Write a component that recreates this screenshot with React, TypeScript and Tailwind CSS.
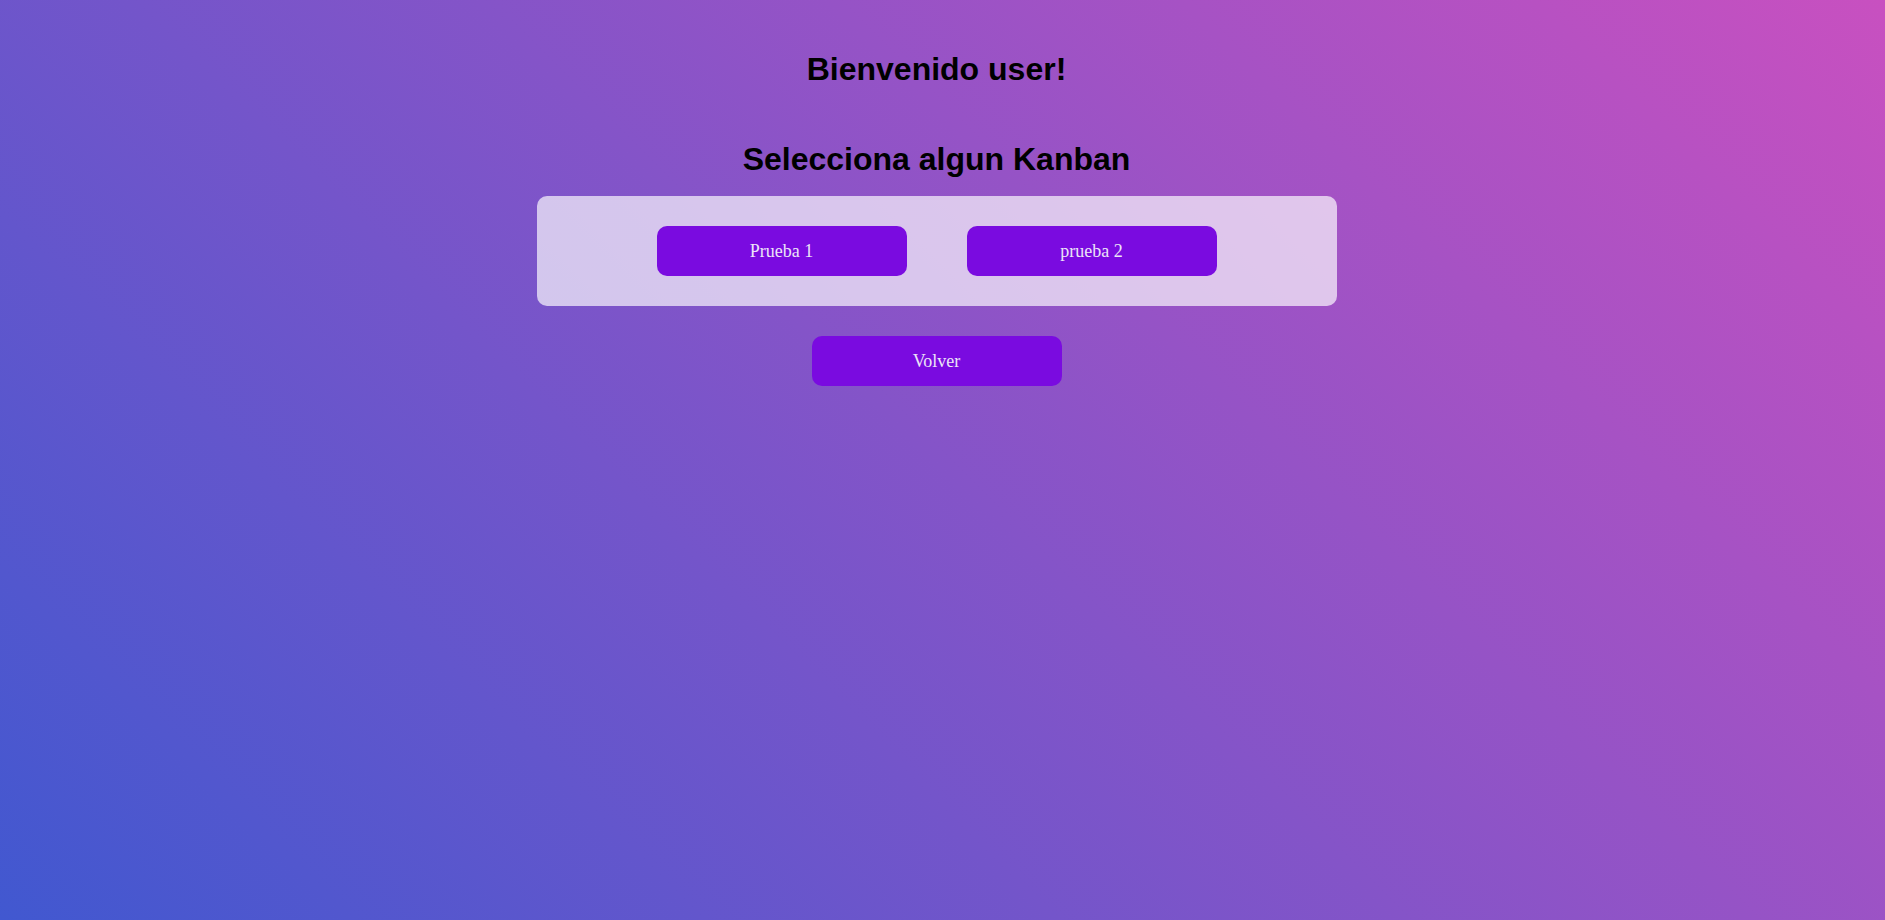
import React from 'react'

const kanbans = [
  { id: 1, name: 'Prueba 1' },
  { id: 2, name: 'prueba 2' },
]

function KanbanButton({ label }: { label: string }) {
  return (
    <button
      type="button"
      className="flex h-[50px] w-[250px] items-center justify-center rounded-[10px] bg-[#7a0be0] text-[18px] text-[#ece4f7] [font-family:'Liberation_Serif','Times_New_Roman',serif]"
    >
      {label}
    </button>
  )
}

export default function App() {
  return (
    <div className="min-h-screen w-full bg-[linear-gradient(45deg,#4158D0,#C850C0)] [font-family:'Liberation_Sans',Arial,sans-serif]">
      <div className="flex flex-col items-center pt-[51px] pr-3">
        <h1 className="text-[32px] leading-[37px] font-bold text-black">Bienvenido user!</h1>
        <h2 className="mt-[53px] text-[32px] leading-[37px] font-bold text-black">Selecciona algun Kanban</h2>

        <div className="mt-[18px] flex w-[800px] justify-center gap-[60px] rounded-[10px] bg-white/[0.67] py-[30px]">
          {kanbans.map((k) => (
            <KanbanButton key={k.id} label={k.name} />
          ))}
        </div>

        <div className="mt-[30px]">
          <KanbanButton label="Volver" />
        </div>
      </div>
    </div>
  )
}
